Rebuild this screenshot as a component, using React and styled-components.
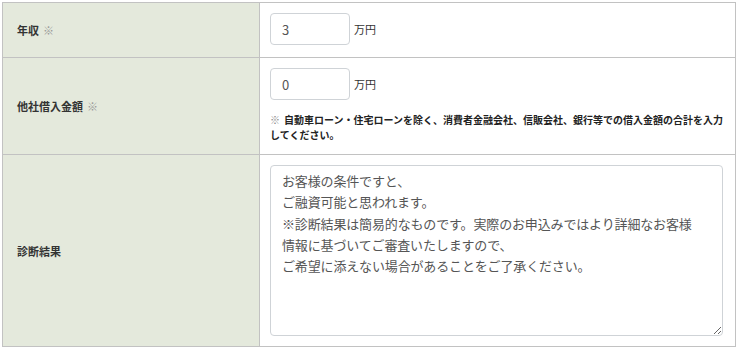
import styled, { createGlobalStyle } from "styled-components";

const Global = createGlobalStyle`
  body {
    margin: 0;
    background: #fff;
    font-family: "Noto Sans CJK JP", "Noto Sans", sans-serif;
    color: #333;
  }
`;

const Wrap = styled.div`
  padding: 2px;
`;

const Table = styled.table`
  width: 734px;
  border-collapse: collapse;
  table-layout: fixed;
`;

const Th = styled.th`
  width: 257px;
  background: #e4e9dc;
  border: 1px solid #c2c2c2;
  padding: 0 14px;
  text-align: left;
  font-size: 11px;
  font-weight: 700;
  color: #333;
  vertical-align: middle;
  height: ${props => props.$h}px;
  box-sizing: border-box;
`;

const Mark = styled.span`
  margin-left: 4px;
  font-weight: 400;
  color: #999;
`;

const Td = styled.td`
  border: 1px solid #c2c2c2;
  padding: 10px 10px ${props => props.$pb || 10}px;
  vertical-align: top;
  background: #fff;
`;

const Field = styled.div`
  display: flex;
  align-items: center;
  gap: 4px;
`;

const Input = styled.input`
  box-sizing: border-box;
  width: 80px;
  height: 32px;
  padding: 0 11px;
  border: 1px solid #cfd3d7;
  border-radius: 4px;
  font-family: "Noto Sans CJK JP", "Noto Sans", sans-serif;
  font-size: 13px;
  color: #555;
  outline: none;
`;

const Unit = styled.span`
  font-size: 11px;
  color: #333;
`;

const Note = styled.p`
  margin: 12px 0 0;
  font-size: 10px;
  line-height: 15px;
  font-weight: 700;
  color: #222;

  &::before {
    content: "※";
    font-weight: 400;
    color: #888;
    margin-right: 4px;
  }
`;

const Result = styled.textarea`
  display: block;
  box-sizing: border-box;
  width: 453px;
  height: 171px;
  padding: 4px 11px;
  border: 1px solid #cfd3d7;
  border-radius: 4px;
  font-family: "Noto Sans CJK JP", "Noto Sans", sans-serif;
  font-size: 13px;
  line-height: 21.3px;
  letter-spacing: -0.15px;
  color: #555;
  outline: none;
`;

const resultText =
  "お客様の条件ですと、\nご融資可能と思われます。\n※診断結果は簡易的なものです。実際のお申込みではより詳細なお客様\n情報に基づいてご審査いたしますので、\nご希望に添えない場合があることをご了承ください。";

const App = () => {
  return (
    <Wrap>
      <Global />
      <Table>
        <tbody>
          <tr>
            <Th $h={55}>年収<Mark>※</Mark></Th>
            <Td $pb={11}>
              <Field>
                <Input defaultValue="3" />
                <Unit>万円</Unit>
              </Field>
            </Td>
          </tr>
          <tr>
            <Th $h={97}>他社借入金額<Mark>※</Mark></Th>
            <Td $pb={11}>
              <Field>
                <Input defaultValue="0" />
                <Unit>万円</Unit>
              </Field>
              <Note>
                自動車ローン・住宅ローンを除く、消費者金融会社、信販会社、銀行等での借入金額の合計を入力してください。
              </Note>
            </Td>
          </tr>
          <tr>
            <Th $h={192}>診断結果</Th>
            <Td>
              <Result readOnly value={resultText} />
            </Td>
          </tr>
        </tbody>
      </Table>
    </Wrap>
  );
};

export default App;
